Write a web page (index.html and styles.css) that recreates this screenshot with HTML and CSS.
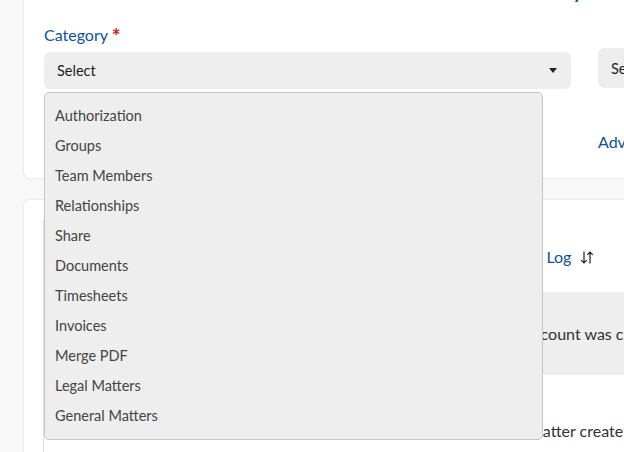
FILE: index.html
```html
<!DOCTYPE html>
<html lang="en">
<head>
  <meta charset="UTF-8" />
  <meta name="viewport" content="width=device-width, initial-scale=1.0"/>
  <title>Activity</title>
  <link rel="stylesheet" href="styles.css">
</head>
<body>
  <div class="page">
    <!-- Search filters -->
    <div class="card search-card">
      <h2 class="card-title">Activity</h2>

      <div class="filter-row">
        <div class="field">
          <label class="field-label">Category <span class="req">*</span></label>
          <div class="select-wrap">
            <div class="select">
              <span>Select</span>
              <span class="caret"></span>
            </div>
            <ul class="dropdown">
              <li>Authorization</li>
              <li>Groups</li>
              <li>Team Members</li>
              <li>Relationships</li>
              <li>Share</li>
              <li>Documents</li>
              <li>Timesheets</li>
              <li>Invoices</li>
              <li>Merge PDF</li>
              <li>Legal Matters</li>
              <li>General Matters</li>
            </ul>
          </div>
        </div>

        <div class="field field-side">
          <div class="select select-side">
            <span>Select</span>
            <span class="caret"></span>
          </div>
        </div>

        <div></div>
        <a class="adv-link" href="#">Advanced Search</a>
      </div>
    </div>

    <!-- Activity log -->
    <div class="card log-card">
      <table class="log-table">
        <thead>
          <tr>
            <th class="col-date">Date</th>
            <th class="col-user">User</th>
            <th class="col-log">
              Activity <span class="sort-label">Log</span>
              <svg class="sort-icon" width="14" height="15" viewBox="0 0 14 15">
                <path d="M4 1.5v11.5M1.2 10.2L4 13l2.8-2.8" fill="none" stroke="#222" stroke-width="1.2"/>
                <path d="M10 13.5V2M7.2 4.8L10 2l2.8 2.8" fill="none" stroke="#222" stroke-width="1.2"/>
              </svg>
            </th>
          </tr>
        </thead>
        <tbody>
          <tr class="row-alt">
            <td>03/14/2024 10:22 AM</td>
            <td>Admin</td>
            <td class="col-log">New account was created for the client</td>
          </tr>
          <tr>
            <td>03/12/2024 04:10 PM</td>
            <td>Update</td>
            <td class="col-log">Bring matter create:</td>
          </tr>
        </tbody>
      </table>
    </div>
  </div>
</body>
</html>
```

FILE: styles.css
```css
* {
  box-sizing: border-box;
}

html, body {
  overflow: hidden;
}

body {
  margin: 0;
  background: #f8f8f8;
  font-family: Lato, "Open Sans", sans-serif;
  color: #333;
}

.page {
  width: 960px;
  margin-top: -46px;
  padding-left: 24px;
}

.card {
  background: #fff;
  border-radius: 6px;
  box-shadow: 0 0 3px rgba(0, 0, 0, 0.12);
}

.search-card {
  padding: 16px 20px 26px;
}

.card-title {
  margin: 0 0 21px 453px;
  font-size: 26px;
  font-weight: 400;
  line-height: 34px;
  color: #0d5295;
}

.filter-row {
  display: grid;
  grid-template-columns: 527px 180px;
  column-gap: 27px;
  row-gap: 43px;
}

.field-label {
  display: block;
  font-size: 16px;
  line-height: 20px;
  color: #0d5295;
  margin-bottom: 7px;
}

.req {
  color: #e01818;
  font-size: 21px;
  font-weight: 700;
  line-height: 0;
  vertical-align: -3px;
}

.select-wrap {
  position: relative;
}

.select {
  height: 37px;
  background: #eeeeee;
  border-radius: 6px;
  display: flex;
  align-items: center;
  justify-content: space-between;
  padding: 0 14px 0 13px;
  font-size: 14.5px;
  color: #1e1e1e;
}

.caret {
  width: 0;
  height: 0;
  border-left: 4px solid transparent;
  border-right: 4px solid transparent;
  border-top: 5px solid #222;
}

.field-side {
  padding-top: 23px;
}

.select-side {
  height: 40px;
}

.dropdown {
  position: absolute;
  top: 40px;
  left: 0;
  width: 499px;
  margin: 0;
  padding: 8px 0 8px;
  list-style: none;
  background: #eeeeee;
  border: 1px solid #c6c6c6;
  border-radius: 5px;
  z-index: 10;
}

.dropdown li {
  padding-left: 10px;
  line-height: 30px;
  font-size: 14.5px;
  color: #444;
}

.adv-link {
  font-size: 16px;
  line-height: 20px;
  color: #0d5295;
  text-decoration: none;
  white-space: nowrap;
}

.log-card {
  margin-top: 22px;
  padding: 20px 0 0 19px;
  height: 300px;
}

.log-table {
  table-layout: fixed;
  width: 833px;
  border-collapse: collapse;
  border-left: 1px solid #dedede;
  font-size: 16px;
}

.log-table th {
  height: 72px;
  text-align: left;
  font-weight: 400;
  font-size: 16px;
  color: #0d5295;
  padding: 0 12px;
  white-space: nowrap;
}

.log-table td {
  padding: 0 12px;
  height: 83px;
  white-space: nowrap;
  overflow: hidden;
  color: #333;
}

.col-date {
  width: 275px;
}

.col-user {
  width: 158px;
}

.col-log {
  width: 400px;
}

.sort-icon {
  vertical-align: -2px;
  margin-left: 4px;
}

.row-alt td {
  background: #eeeeee;
  box-shadow: 0 2px 2px rgba(0, 0, 0, 0.12);
}

.log-table tbody tr:last-child td {
  padding-top: 28px;
}
```
